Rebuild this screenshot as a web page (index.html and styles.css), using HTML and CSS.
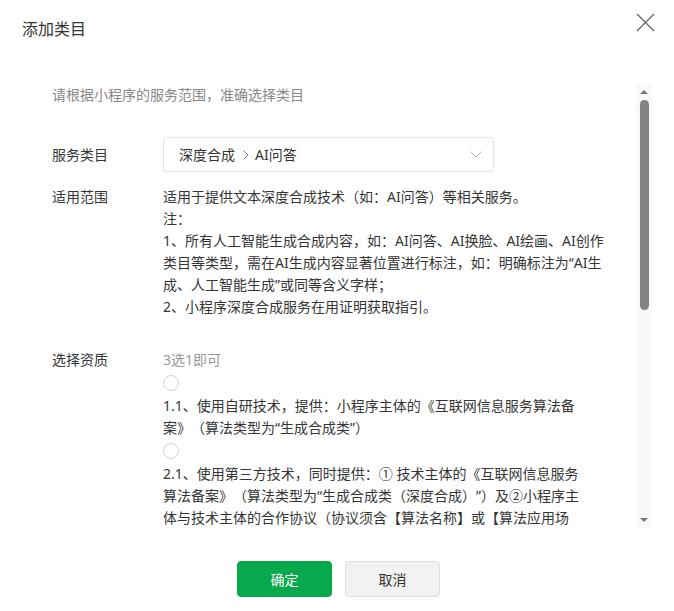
FILE: index.html
```html
<!DOCTYPE html>
<html lang="zh-CN">
<head>
  <meta charset="UTF-8">
  <title>添加类目</title>
  <link rel="stylesheet" href="styles.css">
</head>
<body>
  <div class="dialog">
    <div class="dialog-header">
      <div class="dialog-title">添加类目</div>
      <svg class="close" width="19" height="19" viewBox="0 0 19 19">
        <path d="M1 1 L18 18 M18 1 L1 18" stroke="#6b6b6b" stroke-width="1.4" fill="none"/>
      </svg>
    </div>

    <div class="dialog-body">
      <div class="content">
        <div class="intro">请根据小程序的服务范围，准确选择类目</div>

        <div class="form-row row-select">
          <div class="label">服务类目</div>
          <div class="select">
            <span class="select-text">深度合成<svg class="crumb" width="6" height="10" viewBox="0 0 6 10"><path d="M0.7 0.7 L5 5 L0.7 9.3" stroke="#777" stroke-width="1" fill="none"/></svg>AI问答</span>
            <svg class="arrow" width="12" height="7" viewBox="0 0 12 7"><path d="M0.5 0.5 L6 6 L11.5 0.5" stroke="#b5b5b5" stroke-width="1" fill="none"/></svg>
          </div>
        </div>

        <div class="form-row row-scope">
          <div class="label">适用范围</div>
          <div class="value">
            适用于提供文本深度合成技术（如：AI问答）等相关服务。<br>
            注：<br>
            1、所有人工智能生成合成内容，如：AI问答、AI换脸、AI绘画、AI创作<br>
            类目等类型，需在AI生成内容显著位置进行标注，如：明确标注为“AI生<br>
            成、人工智能生成”或同等含义字样；<br>
            2、小程序深度合成服务在用证明获取指引。
          </div>
        </div>

        <div class="form-row row-quals">
          <div class="label">选择资质</div>
          <div class="value">
            <div class="hint">3选1即可</div>
            <div class="radio-row"><span class="radio"></span></div>
            <div class="option">
              1.1、使用自研技术，提供：小程序主体的《互联网信息服务算法备<br>
              案》（算法类型为“生成合成类”）
            </div>
            <div class="radio-row"><span class="radio"></span></div>
            <div class="option">
              2.1、使用第三方技术，同时提供：① 技术主体的《互联网信息服务<br>
              算法备案》（算法类型为“生成合成类（深度合成）”）及②小程序主<br>
              体与技术主体的合作协议（协议须含【算法名称】或【算法应用场
            </div>
          </div>
        </div>
      </div>

      <div class="scrollbar">
        <div class="sb-btn"><span class="tri-up"></span></div>
        <div class="sb-thumb"></div>
        <div class="sb-space"></div>
        <div class="sb-btn"><span class="tri-down"></span></div>
      </div>
    </div>

    <div class="dialog-footer">
      <button class="btn btn-primary">确定</button>
      <button class="btn btn-default">取消</button>
    </div>
  </div>
</body>
</html>
```

FILE: styles.css
```css
body {
  margin: 0;
  background-color: #fff;
  font-family: "Noto Sans", "Noto Sans CJK SC", sans-serif;
  color: #353535;
  text-spacing-trim: space-all;
}
.dialog {
  width: 674px;
  height: 611px;
  display: flex;
  flex-direction: column;
}
.dialog-header {
  height: 84px;
  box-sizing: border-box;
  padding: 13px 19px 0 22px;
  display: flex;
  justify-content: space-between;
  align-items: flex-start;
}
.dialog-title {
  margin-top: 4px;
  font-size: 16px;
  line-height: 24px;
  color: #333;
}
.close {
  display: block;
}
.dialog-body {
  height: 444px;
  display: flex;
}
.content {
  flex: 1;
  overflow: hidden;
  padding-left: 52px;
  font-size: 14px;
  line-height: 22px;
}
.intro {
  color: #888;
}
.form-row {
  display: flex;
}
.label {
  width: 111px;
  flex-shrink: 0;
  color: #353535;
}
.value {
  white-space: nowrap;
}
.row-select {
  margin-top: 31px;
  align-items: center;
}
.select {
  width: 331px;
  height: 35px;
  box-sizing: border-box;
  border: 1px solid #e4e4e4;
  border-radius: 3px;
  padding: 0 5px 0 15px;
  display: flex;
  align-items: center;
  justify-content: space-between;
  color: #333;
}
.select-text {
  display: flex;
  align-items: center;
}
.crumb {
  margin: 0 6px 0 8px;
}
.arrow {
  margin-right: 6px;
}
.row-scope {
  margin-top: 14px;
}
.row-quals {
  margin-top: 31px;
}
.hint {
  color: #999;
}
.radio-row {
  height: 24px;
  display: flex;
  align-items: center;
}
.radio {
  width: 14px;
  height: 14px;
  border: 1px solid #d4d4d4;
  border-radius: 50%;
}
.scrollbar {
  width: 16px;
  margin-right: 22px;
  background-color: #f8f8f8;
  display: flex;
  flex-direction: column;
  align-items: center;
}
.sb-btn {
  height: 16px;
  display: flex;
  align-items: center;
  justify-content: center;
}
.tri-up {
  border-left: 4px solid transparent;
  border-right: 4px solid transparent;
  border-bottom: 4px solid #777;
}
.tri-down {
  border-left: 4px solid transparent;
  border-right: 4px solid transparent;
  border-top: 4px solid #777;
}
.sb-thumb {
  width: 9px;
  height: 210px;
  background-color: #838383;
  border-radius: 5px;
}
.sb-space {
  flex: 1;
}
.dialog-footer {
  padding-top: 33px;
  padding-left: 3px;
  display: flex;
  justify-content: center;
  gap: 13px;
}
.btn {
  width: 95px;
  height: 36px;
  border-radius: 4px;
  font-family: "Noto Sans", "Noto Sans CJK SC", sans-serif;
  font-size: 14px;
  cursor: pointer;
}
.btn-primary {
  background-color: #07a94c;
  border: 1px solid #07a94c;
  color: #fff;
}
.btn-default {
  background-color: #f2f2f2;
  border: 1px solid #dedede;
  color: #333;
}
```
